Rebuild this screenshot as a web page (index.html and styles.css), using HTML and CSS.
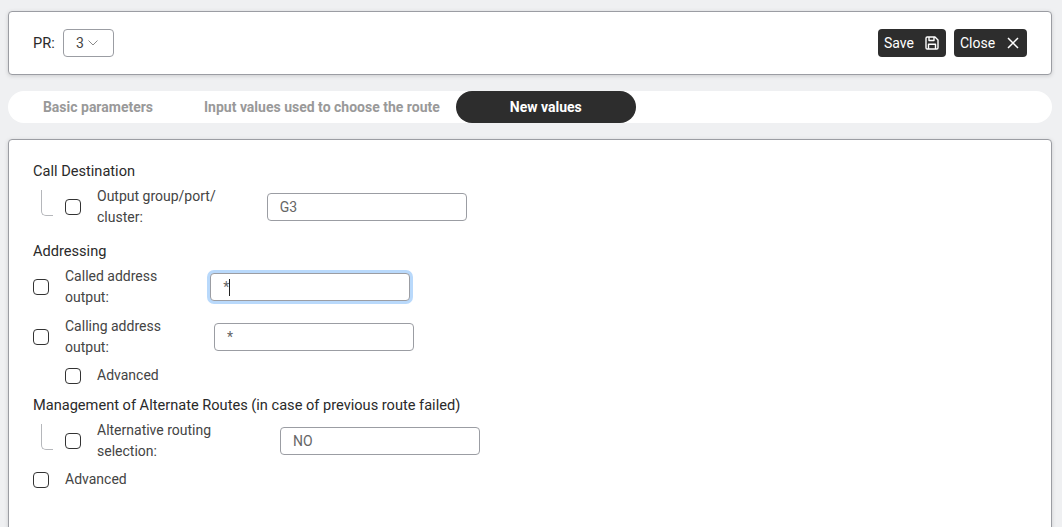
FILE: index.html
```html
<!DOCTYPE html>
<html lang="en">
<head>
    <meta charset="UTF-8">
    <meta name="viewport" content="width=device-width, initial-scale=1.0">
    <title>Route</title>
    <link rel="stylesheet" href="styles.css">
</head>
<body>
    <!-- Header -->
    <div class="card header-card">
        <div class="pr-picker">
            <span class="pr-label">PR:</span>
            <div class="pr-select">
                <span class="pr-value">3</span>
                <svg class="chevron" width="10" height="10" viewBox="0 0 10 10"><path d="M0.5 2.5 L5 7 L9.5 2.5" fill="none" stroke="#8a8a8a" stroke-width="1"/></svg>
            </div>
        </div>
        <div class="actions">
            <button type="button" class="btn btn-save">Save
                <svg width="16" height="16" viewBox="0 0 16 16"><path d="M2 3.2 A1.2 1.2 0 0 1 3.2 2 H11 L14 5 V12.8 A1.2 1.2 0 0 1 12.8 14 H3.2 A1.2 1.2 0 0 1 2 12.8 Z M5 2 V5.5 H10 V2 M4.5 14 V9.2 H11.5 V14" fill="none" stroke="#fff" stroke-width="1.4" stroke-linejoin="round"/></svg>
            </button>
            <button type="button" class="btn btn-close">Close
                <svg width="16" height="16" viewBox="0 0 16 16"><path d="M3 3 L13 13 M13 3 L3 13" fill="none" stroke="#fff" stroke-width="1.5"/></svg>
            </button>
        </div>
    </div>

    <!-- Tabs -->
    <div class="tabs">
        <div class="tab">Basic parameters</div>
        <div class="tab">Input values used to choose the route</div>
        <div class="tab active">New values</div>
    </div>

    <!-- New values -->
    <div class="card form-card">
        <h3 class="section-title">Call Destination</h3>
        <div class="field nested">
            <span class="tree-line"></span>
            <input type="checkbox" class="check">
            <label class="field-label">Output group/port/<br>cluster:</label>
            <input type="text" class="text-input" value="G3">
        </div>

        <h3 class="section-title addressing">Addressing</h3>
        <div class="field">
            <input type="checkbox" class="check">
            <label class="field-label">Called address<br>output:</label>
            <div class="input-wrap">
                <input type="text" class="text-input focused" value="*">
                <span class="caret"></span>
            </div>
        </div>
        <div class="field">
            <input type="checkbox" class="check">
            <label class="field-label">Calling address<br>output:</label>
            <input type="text" class="text-input" value="*">
        </div>
        <div class="field nested plain">
            <input type="checkbox" class="check">
            <label class="field-label">Advanced</label>
        </div>

        <h3 class="section-title">Management of Alternate Routes (in case of previous route failed)</h3>
        <div class="field nested">
            <span class="tree-line"></span>
            <input type="checkbox" class="check">
            <label class="field-label wide">Alternative routing<br>selection:</label>
            <input type="text" class="text-input" value="NO">
        </div>
        <div class="field plain">
            <input type="checkbox" class="check">
            <label class="field-label">Advanced</label>
        </div>
    </div>
</body>
</html>
```

FILE: styles.css
```css
html, body {
    height: 100%;
    margin: 0;
    padding: 0;
    overflow: hidden;
}
body {
    font-family: Roboto, "Liberation Sans", sans-serif;
    font-size: 14px;
    line-height: 21px;
    color: #2a2a2a;
    background-color: #eff0f2;
    padding: 11px 10px 0 8px;
    box-sizing: border-box;
}
.card {
    background: #fff;
    border: 1px solid #9b9da3;
    border-radius: 4px;
    box-shadow: 0 1px 4px rgba(0, 0, 0, 0.15);
}
.header-card {
    display: flex;
    justify-content: space-between;
    align-items: center;
    height: 64px;
    box-sizing: border-box;
    padding: 0 24px;
}
.pr-picker {
    display: flex;
    align-items: center;
    gap: 8px;
}
.pr-label {
    width: 22px;
    font-size: 14.6px;
}
.pr-select {
    display: flex;
    align-items: center;
    gap: 4px;
    width: 51px;
    height: 28px;
    box-sizing: border-box;
    border: 1px solid #9b9da3;
    border-radius: 4px;
    padding-left: 12px;
    color: #444;
}
.actions {
    display: flex;
    gap: 8px;
}
.btn {
    display: flex;
    align-items: center;
    justify-content: space-between;
    height: 28px;
    box-sizing: border-box;
    padding: 0 6px;
    font-family: inherit;
    font-size: 14px;
    color: #fff;
    background-color: #2d2d2d;
    border: none;
    border-radius: 4px;
}
.btn-save {
    width: 68px;
}
.btn-close {
    width: 73px;
}
.tabs {
    display: flex;
    height: 32px;
    margin-top: 16px;
    background: #fff;
    border-radius: 16px;
}
.tab {
    min-width: 180px;
    box-sizing: border-box;
    padding: 0 16px;
    line-height: 32px;
    text-align: center;
    font-weight: 700;
    color: #999;
    border-radius: 16px;
}
.tab.active {
    background-color: #2d2d2d;
    color: #fff;
}
.form-card {
    margin-top: 16px;
    min-height: 420px;
    padding: 21px 24px;
}
.section-title {
    margin: 0 0 4px;
    font-size: 14.6px;
    font-weight: 400;
    line-height: 21px;
}
.section-title.addressing {
    margin-top: 13px;
}
.field {
    display: flex;
    align-items: center;
    min-height: 42px;
    margin-bottom: 8px;
}
.field.plain {
    min-height: 21px;
    margin-top: -1px;
    margin-bottom: 9px;
}
.field.nested {
    padding-left: 32px;
}
.tree-line {
    width: 12px;
    height: 26px;
    margin-left: -24px;
    margin-right: 12px;
    margin-top: -9px;
    border-left: 1px solid #b5b7bb;
    border-bottom: 1px solid #b5b7bb;
    border-bottom-left-radius: 5px;
    box-sizing: border-box;
}
.check {
    appearance: none;
    width: 16px;
    height: 16px;
    margin: 0 16px 0 0;
    flex-shrink: 0;
    background: #fff;
    border: 1px solid #333;
    border-radius: 4px;
}
.field-label {
    margin-right: 53px;
    color: #444;
}
.field.nested .field-label {
    margin-right: 51px;
}
.field.nested .field-label.wide {
    margin-right: 69px;
}
.input-wrap {
    position: relative;
    display: flex;
}
.text-input {
    width: 200px;
    height: 28px;
    box-sizing: border-box;
    padding: 0 12px;
    font-family: inherit;
    font-size: 14px;
    color: #666;
    background: #fff;
    border: 1px solid #9b9da3;
    border-radius: 4px;
    outline: none;
}
.text-input.focused {
    box-shadow: 0 0 0 3px #b9d9fb;
}
.caret {
    position: absolute;
    left: 19px;
    top: 6px;
    width: 1px;
    height: 17px;
    background-color: #222;
}
```
